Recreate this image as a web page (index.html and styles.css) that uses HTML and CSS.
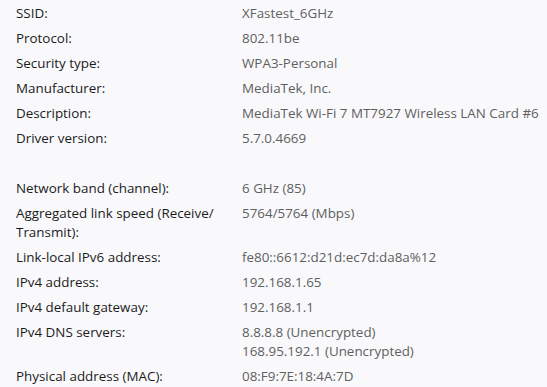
FILE: index.html
```html
<!DOCTYPE html>
<html lang="en">
<head>
<meta charset="utf-8">
<title>Wi-Fi properties</title>
<link rel="stylesheet" href="styles.css">
</head>
<body>
<div class="props">
  <div class="label">SSID:</div><div class="value">XFastest_6GHz</div>
  <div class="label">Protocol:</div><div class="value">802.11be</div>
  <div class="label">Security type:</div><div class="value">WPA3-Personal</div>
  <div class="label">Manufacturer:</div><div class="value">MediaTek, Inc.</div>
  <div class="label">Description:</div><div class="value">MediaTek Wi-Fi 7 MT7927 Wireless LAN Card #6</div>
  <div class="label">Driver version:</div><div class="value">5.7.0.4669</div>
  <div class="spacer"></div>
  <div class="label">Network band (channel):</div><div class="value">6 GHz (85)</div>
  <div class="label">Aggregated link speed (Receive/<wbr>Transmit):</div><div class="value">5764/5764 (Mbps)</div>
  <div class="label">Link-local IPv6 address:</div><div class="value">fe80::6612:d21d:ec7d:da8a%12</div>
  <div class="label">IPv4 address:</div><div class="value">192.168.1.65</div>
  <div class="label">IPv4 default gateway:</div><div class="value">192.168.1.1</div>
  <div class="label">IPv4 DNS servers:</div><div class="value">8.8.8.8 (Unencrypted)<br>168.95.192.1 (Unencrypted)</div>
  <div class="label">Physical address (MAC):</div><div class="value">08:F9:7E:18:4A:7D</div>
</div>
</body>
</html>
```
FILE: styles.css
```css
html, body {
  margin: 0;
  padding: 0;
}
body {
  background: #f9f9fb;
  font-family: "Open Sans", "Noto Sans", "Liberation Sans", sans-serif;
  font-size: 13.4px;
  line-height: 19px;
  color: #1b1b1b;
  overflow: hidden;
}
.props {
  display: grid;
  grid-template-columns: 210px 1fr;
  column-gap: 16px;
  row-gap: 6px;
  padding: 4px 16px 0 16px;
}
.label {
  color: #1b1b1b;
}
.value {
  color: #5f5f5f;
  white-space: nowrap;
}
.spacer {
  grid-column: 1 / -1;
  height: 19px;
}
```
